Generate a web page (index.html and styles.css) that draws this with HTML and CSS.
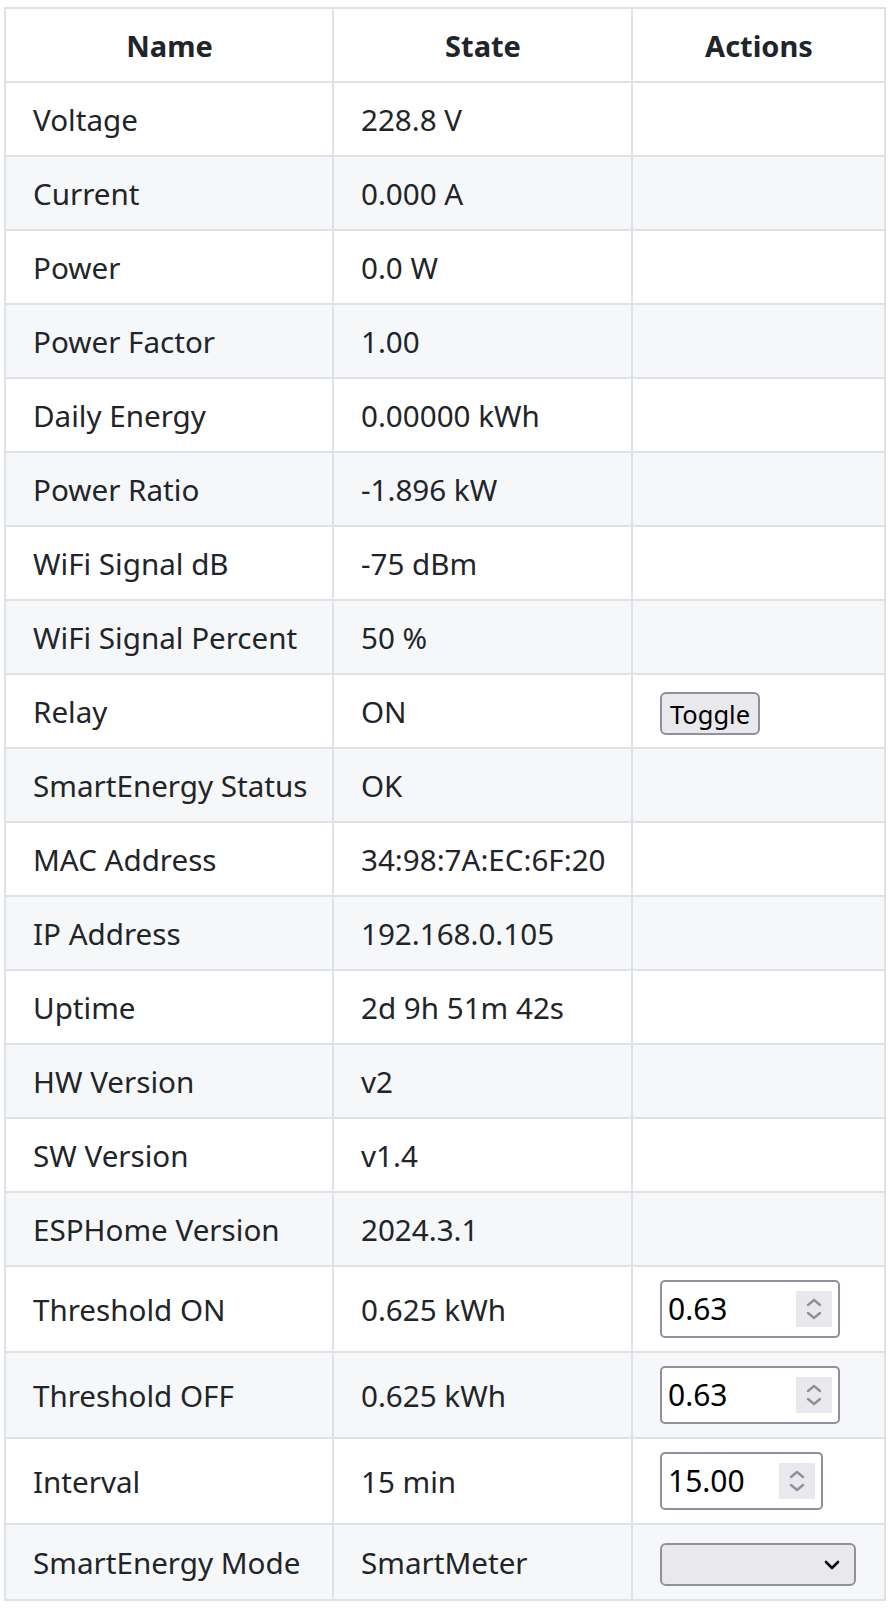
FILE: index.html
```html
<!DOCTYPE html>
<html lang="en">
<head>
<meta charset="utf-8">
<title>Entities</title>
<link rel="stylesheet" href="styles.css">
</head>
<body>
<table class="tbl">
  <colgroup>
    <col class="c1"><col class="c2"><col class="c3">
  </colgroup>
  <thead>
    <tr><th>Name</th><th>State</th><th>Actions</th></tr>
  </thead>
  <tbody>
    <tr><td>Voltage</td><td>228.8 V</td><td></td></tr>
    <tr><td>Current</td><td>0.000 A</td><td></td></tr>
    <tr><td>Power</td><td>0.0 W</td><td></td></tr>
    <tr><td>Power Factor</td><td>1.00</td><td></td></tr>
    <tr><td>Daily Energy</td><td>0.00000 kWh</td><td></td></tr>
    <tr><td>Power Ratio</td><td>-1.896 kW</td><td></td></tr>
    <tr><td>WiFi Signal dB</td><td>-75 dBm</td><td></td></tr>
    <tr><td>WiFi Signal Percent</td><td>50 %</td><td></td></tr>
    <tr><td>Relay</td><td>ON</td><td class="btn-cell"><button class="btn" type="button">Toggle</button></td></tr>
    <tr><td>SmartEnergy Status</td><td>OK</td><td></td></tr>
    <tr><td>MAC Address</td><td>34:98:7A:EC:6F:20</td><td></td></tr>
    <tr><td>IP Address</td><td>192.168.0.105</td><td></td></tr>
    <tr><td>Uptime</td><td>2d 9h 51m 42s</td><td></td></tr>
    <tr><td>HW Version</td><td>v2</td><td></td></tr>
    <tr><td>SW Version</td><td>v1.4</td><td></td></tr>
    <tr><td>ESPHome Version</td><td>2024.3.1</td><td></td></tr>
    <tr><td>Threshold ON</td><td>0.625 kWh</td><td class="in-cell">
      <div class="num num-wide"><span class="num-val">0.63</span><span class="spin"><svg viewBox="0 0 36 36" width="36" height="36"><path d="M12 14 L18 9 L24 14 M12 22 L18 27 L24 22" fill="none" stroke="#8f8f9d" stroke-width="2.4" stroke-linecap="round" stroke-linejoin="round"/></svg></span></div>
    </td></tr>
    <tr><td>Threshold OFF</td><td>0.625 kWh</td><td class="in-cell">
      <div class="num num-wide"><span class="num-val">0.63</span><span class="spin"><svg viewBox="0 0 36 36" width="36" height="36"><path d="M12 14 L18 9 L24 14 M12 22 L18 27 L24 22" fill="none" stroke="#8f8f9d" stroke-width="2.4" stroke-linecap="round" stroke-linejoin="round"/></svg></span></div>
    </td></tr>
    <tr><td>Interval</td><td>15 min</td><td class="in-cell">
      <div class="num num-narrow"><span class="num-val">15.00</span><span class="spin"><svg viewBox="0 0 36 36" width="36" height="36"><path d="M12 14 L18 9 L24 14 M12 22 L18 27 L24 22" fill="none" stroke="#8f8f9d" stroke-width="2.4" stroke-linecap="round" stroke-linejoin="round"/></svg></span></div>
    </td></tr>
    <tr><td>SmartEnergy Mode</td><td>SmartMeter</td><td class="sel-cell">
      <div class="sel"><svg viewBox="0 0 16 10" width="16" height="10"><path d="M2 2 L8 8 L14 2" fill="none" stroke="#111" stroke-width="2.6" stroke-linecap="round" stroke-linejoin="round"/></svg></div>
    </td></tr>
  </tbody>
</table>
</body>
</html>
```
FILE: styles.css
```css
html, body {
  margin: 0;
  padding: 0;
  background: #ffffff;
}
body {
  padding: 7px 8px 0 4px;
  font-family: "Noto Sans", "Open Sans", "DejaVu Sans", sans-serif;
  font-size: 29.6px;
  color: #212529;
}
.tbl {
  border-collapse: collapse;
  table-layout: fixed;
  width: 880px;
}
.c1 { width: 328px; }
.c2 { width: 299px; }
.c3 { width: 253px; }
.tbl th, .tbl td {
  border: 2px solid #dee2e6;
  line-height: 42px;
  padding: 16px 26px 14px 27px;
  vertical-align: middle;
  text-align: left;
  white-space: nowrap;
}
.tbl th {
  text-align: center;
  font-weight: 700;
  font-size: 29px;
}
.tbl tbody tr:nth-child(even) td {
  background: #f6f7f9;
}
.tbl td.btn-cell {
  padding-top: 17px;
  padding-bottom: 12px;
}
.btn {
  display: block;
  width: 100px;
  height: 43px;
  box-sizing: border-box;
  border: 2px solid #8f8f9d;
  border-radius: 6px;
  background: #e9e9ed;
  color: #000;
  font-family: inherit;
  font-size: 25.5px;
  line-height: 36px;
  padding: 0;
  text-align: center;
}
.tbl td.in-cell {
  padding-top: 13px;
  padding-bottom: 13px;
}
.num {
  display: flex;
  align-items: center;
  justify-content: space-between;
  box-sizing: border-box;
  height: 58px;
  border: 2px solid #8f8f9d;
  border-radius: 5px;
  background: #fff;
  padding: 0 6px 0 6px;
  color: #000;
}
.num-wide { width: 180px; }
.num-narrow { width: 163px; }
.num-val {
  font-size: 30px;
  line-height: 40px;
}
.spin {
  display: flex;
  align-items: center;
  justify-content: center;
  width: 36px;
  height: 36px;
  background: #e9e9ed;
}
.spin svg { display: block; }
.tbl td.sel-cell {
  padding-top: 18px;
  padding-bottom: 13px;
}
.sel {
  display: flex;
  align-items: center;
  justify-content: flex-end;
  box-sizing: border-box;
  width: 196px;
  height: 43px;
  border: 2px solid #8f8f9d;
  border-radius: 6px;
  background: #e9e9ed;
  padding-right: 14px;
}
.sel svg { display: block; }
```
